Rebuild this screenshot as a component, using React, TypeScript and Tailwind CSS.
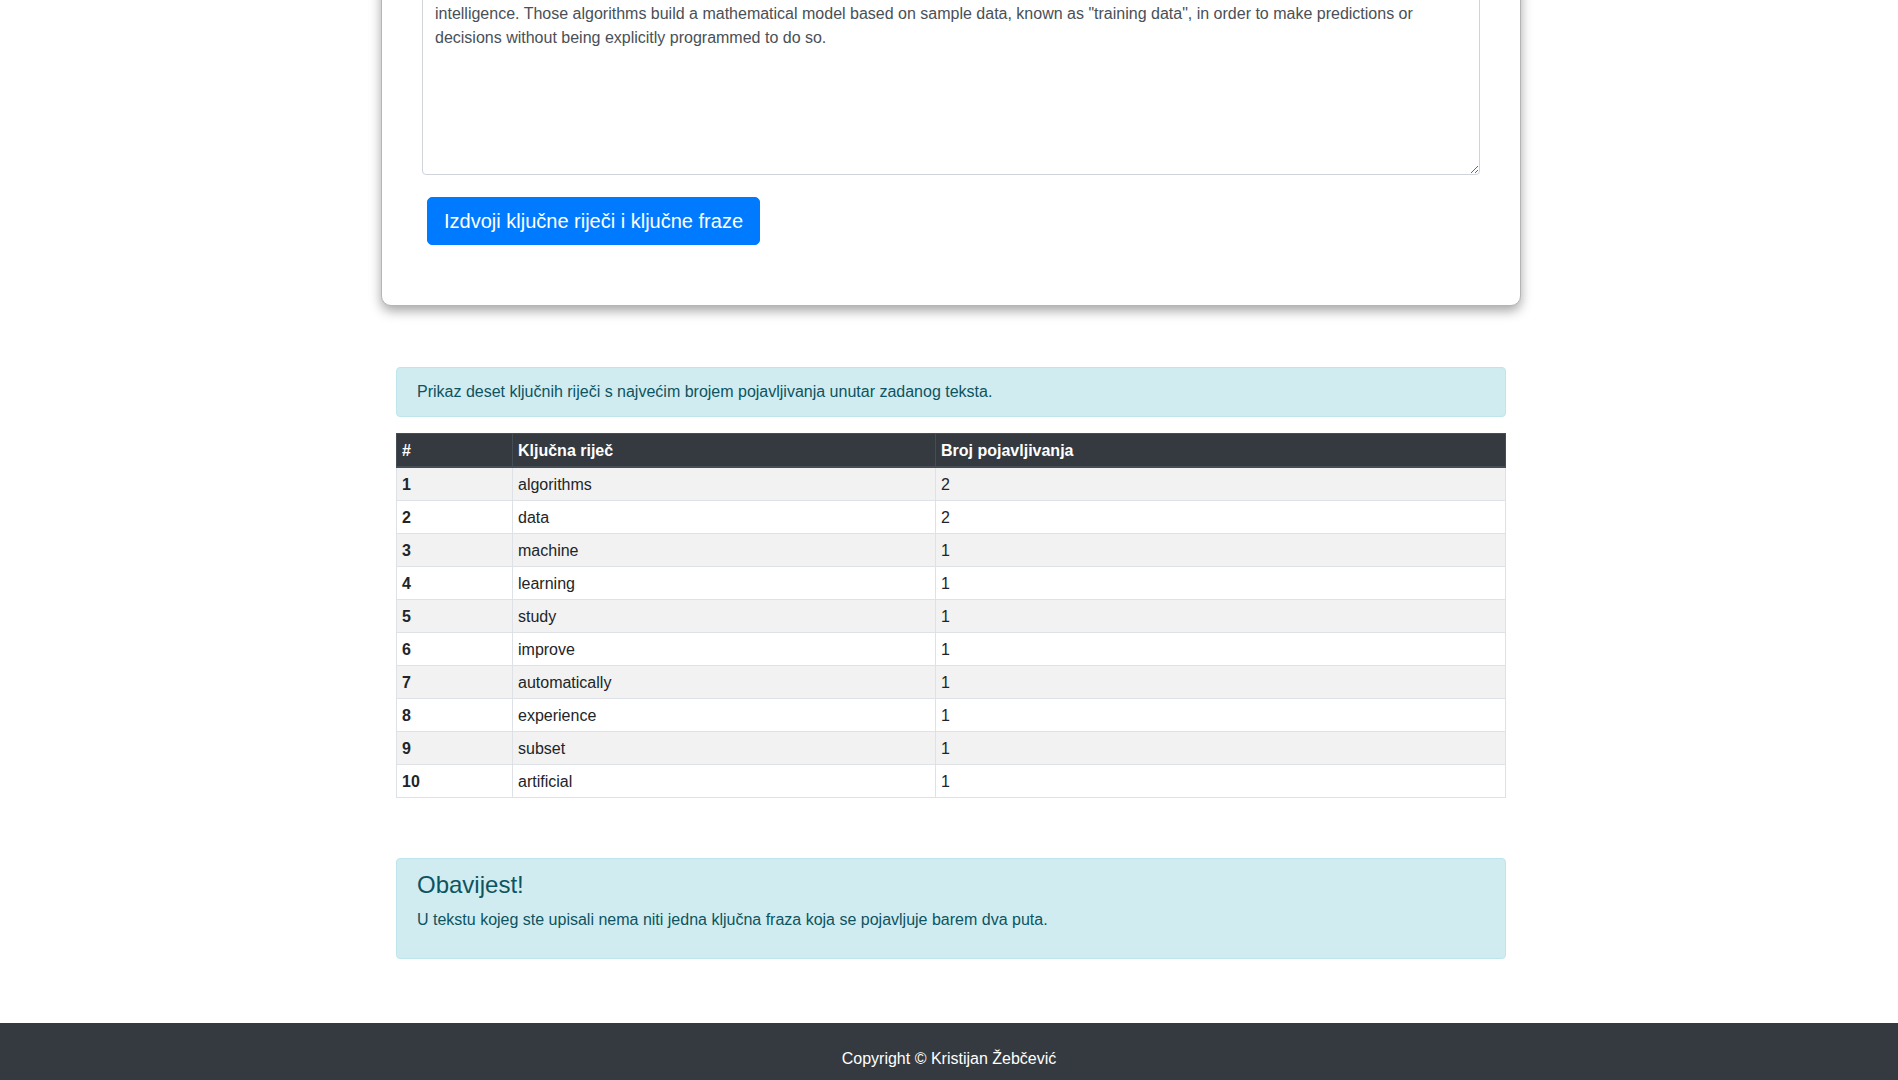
import React from "react";

const keywords = [
  { word: "algorithms", count: 2 },
  { word: "data", count: 2 },
  { word: "machine", count: 1 },
  { word: "learning", count: 1 },
  { word: "study", count: 1 },
  { word: "improve", count: 1 },
  { word: "automatically", count: 1 },
  { word: "experience", count: 1 },
  { word: "subset", count: 1 },
  { word: "artificial", count: 1 },
];

const inputText =
  "Machine learning is the study of computer algorithms that improve automatically through experience. It is seen as a subset of artificial\n" +
  'intelligence. Those algorithms build a mathematical model based on sample data, known as "training data", in order to make predictions or\n' +
  "decisions without being explicitly programmed to do so.";

export default function App() {
  return (
    <div className="min-h-screen bg-white font-['Liberation_Sans',Arial,sans-serif] text-[16px] leading-6 text-[#212529]">
      <div className="flex justify-center pl-[4px]">
        <div className="w-[1140px]">
          {/* input card, scrolled past its top */}
          <div className="-mt-[70px] rounded-[10px] border border-[#b5b5b5] bg-white px-[40px] pt-[40px] pb-[60px] shadow-[0_5px_12px_rgba(0,0,0,0.35)]">
            <textarea
              defaultValue={inputText}
              wrap="off"
              className="block h-[204px] w-full overflow-hidden rounded-[4px] border border-[#ced4da] px-3 py-[6px] text-[16px] leading-6 text-[#495057] outline-none"
            />
            <button className="mt-[22px] ml-[5px] h-[48px] rounded-[5px] border border-[#007bff] bg-[#007bff] px-4 text-[20px] leading-[30px] text-white">
              Izdvoji ključne riječi i ključne fraze
            </button>
          </div>

          <div className="px-[15px]">
            <div className="mt-[61px] mb-4 rounded-[4px] border border-[#bee5eb] bg-[#d1ecf1] px-5 py-3 text-[#0c5460]">
              Prikaz deset ključnih riječi s najvećim brojem pojavljivanja unutar zadanog teksta.
            </div>

            <table className="w-full table-fixed border-collapse border border-[#dee2e6]">
              <colgroup>
                <col className="w-[116px]" />
                <col className="w-[423px]" />
                <col />
              </colgroup>
              <thead>
                <tr className="bg-[#343a40] text-white">
                  <th className="border border-[#454d55] border-b-2 px-[5px] pt-[5px] pb-[3px] text-left font-bold">#</th>
                  <th className="border border-[#454d55] border-b-2 px-[5px] pt-[5px] pb-[3px] text-left font-bold">Ključna riječ</th>
                  <th className="border border-[#454d55] border-b-2 px-[5px] pt-[5px] pb-[3px] text-left font-bold">Broj pojavljivanja</th>
                </tr>
              </thead>
              <tbody>
                {keywords.map((k, i) => (
                  <tr key={k.word} className={i % 2 === 0 ? "bg-[#f2f2f2]" : "bg-white"}>
                    <th className="border border-[#dee2e6] px-[5px] pt-[5px] pb-[3px] text-left font-bold">{i + 1}</th>
                    <td className="border border-[#dee2e6] px-[5px] pt-[5px] pb-[3px]">{k.word}</td>
                    <td className="border border-[#dee2e6] px-[5px] pt-[5px] pb-[3px]">{k.count}</td>
                  </tr>
                ))}
              </tbody>
            </table>

            <div className="mt-[60px] rounded-[4px] border border-[#bee5eb] bg-[#d1ecf1] px-5 py-3 text-[#0c5460]">
              <h4 className="mb-2 text-[24px] leading-[1.2] font-medium">Obavijest!</h4>
              <p className="mb-[14px]">U tekstu kojeg ste upisali nema niti jedna ključna fraza koja se pojavljuje barem dva puta.</p>
            </div>
          </div>
        </div>
      </div>

      <footer className="mt-[64px] bg-[#343a40] py-6 text-center text-white">
        Copyright © Kristijan Žebčević
      </footer>
    </div>
  );
}
